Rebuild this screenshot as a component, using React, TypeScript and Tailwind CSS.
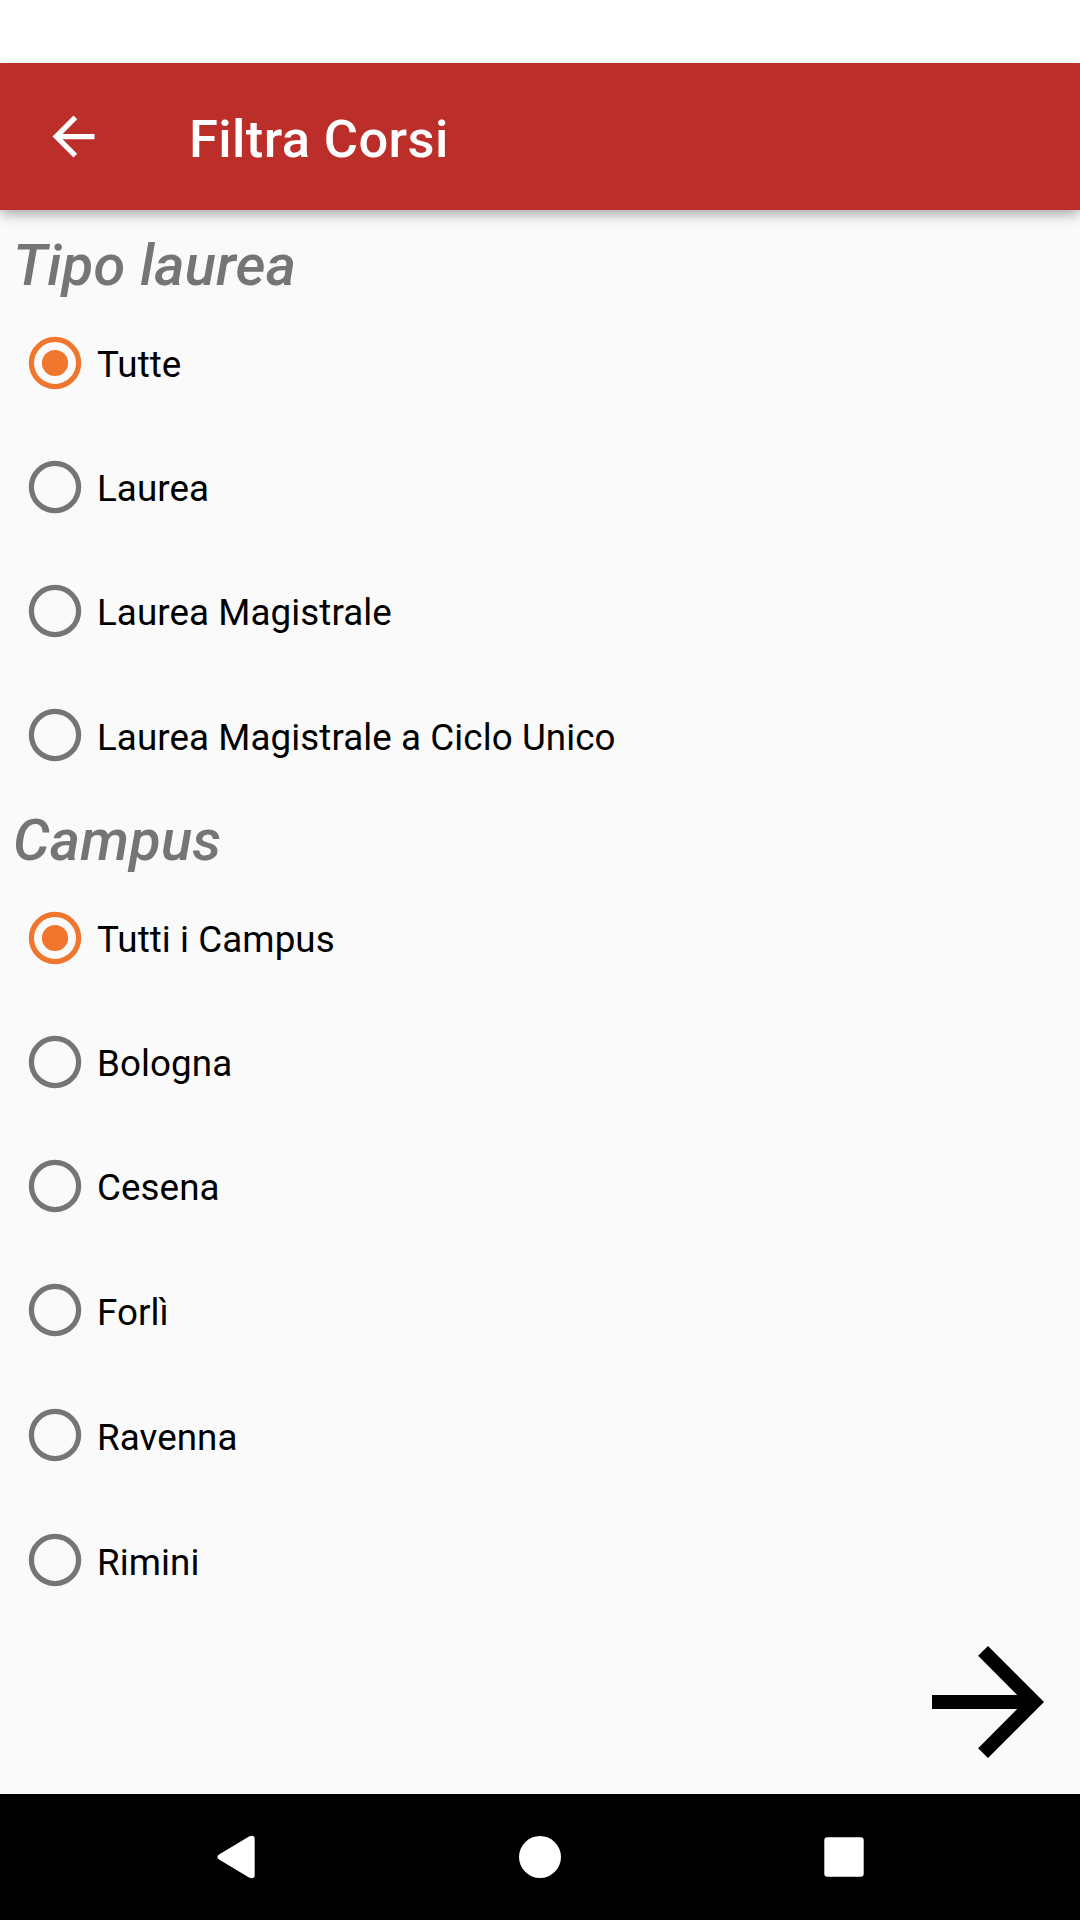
import React from "react";

type RadioProps = { label: string; checked?: boolean; row?: string; text?: string };

function Radio({ label, checked = false, row = "h-[124px]", text = "pt-[3px]" }: RadioProps) {
  return (
    <label className={`flex shrink-0 items-center ${row}`}>
      <svg className="ml-[7px] size-24 shrink-0" viewBox="0 0 96 96" fill="none">
        <circle cx="48" cy="48" r="23.6" stroke={checked ? "#ef762c" : "#757575"} strokeWidth="5.25" />
        {checked && <circle cx="48" cy="48" r="13.1" fill="#ef762c" />}
      </svg>
      <span className={`-ml-[6px] text-[36.75px] leading-[43px] tracking-[0.08px] whitespace-nowrap text-black ${text}`}>{label}</span>
    </label>
  );
}

function Heading({ children }: { children: React.ReactNode }) {
  return (
    <h2 className="mt-[9px] mb-[2px] shrink-0 pl-[13px] text-[57.75px] leading-[68px] font-medium tracking-[0.2px] italic text-[#757575]">
      {children}
    </h2>
  );
}

export default function App() {
  return (
    <div className="flex h-[1920px] w-[1080px] flex-col overflow-hidden bg-[#fafafa] font-['Roboto',sans-serif]">
      <div className="h-[63px] shrink-0 bg-white" />
      <header className="flex h-[147px] shrink-0 items-center bg-[#bb2e29] shadow-[0_5px_12px_-1px_rgba(0,0,0,0.35)]">
        <svg className="ml-[42px] size-[63px]" viewBox="0 0 24 24" fill="white">
          <path d="M20 11H7.83l5.59-5.59L12 4l-8 8 8 8 1.41-1.41L7.83 13H20v-2z" />
        </svg>
        <h1 className="ml-[84px] pt-[5px] text-[52.5px] leading-none font-medium tracking-[0.38px] text-white">Filtra Corsi</h1>
      </header>
      <main className="flex grow flex-col pt-3">
        <Heading>Tipo laurea</Heading>
        <Radio label="Tutte" checked />
        <Radio label="Laurea" />
        <Radio label="Laurea Magistrale" />
        <Radio label="Laurea Magistrale a Ciclo Unico" text="pt-[5px]" />
        <Heading>Campus</Heading>
        <Radio label="Tutti i Campus" checked />
        <Radio label="Bologna" />
        <Radio label="Cesena" />
        <Radio label="Forlì" text="pt-[5px]" />
        <Radio label="Ravenna" row="h-[126px]" text="pt-[5px]" />
        <Radio label="Rimini" text="pt-[5px]" />
      </main>
      <div className="flex h-[172px] shrink-0 items-start justify-end">
        <svg className="-mt-1 mr-2 size-[168px]" viewBox="0 0 24 24">
          <path d="M12 4l-1.41 1.41L16.17 11H4v2h12.17l-5.58 5.59L12 20l8-8z" />
        </svg>
      </div>
      <nav className="flex h-[126px] shrink-0 bg-black">
        <svg className="h-[126px] w-[1080px]" viewBox="0 0 1080 126" fill="white">
          <path d="M219 60.5 249 42.4Q254.7 40.5 254.7 45V81Q254.7 85.5 249 83.6L219 65.5Q215.8 63 219 60.5Z" />
          <circle cx="540" cy="63" r="21" />
          <rect x="824.3" y="43.3" width="39.4" height="39.4" rx="3" />
        </svg>
      </nav>
    </div>
  );
}
